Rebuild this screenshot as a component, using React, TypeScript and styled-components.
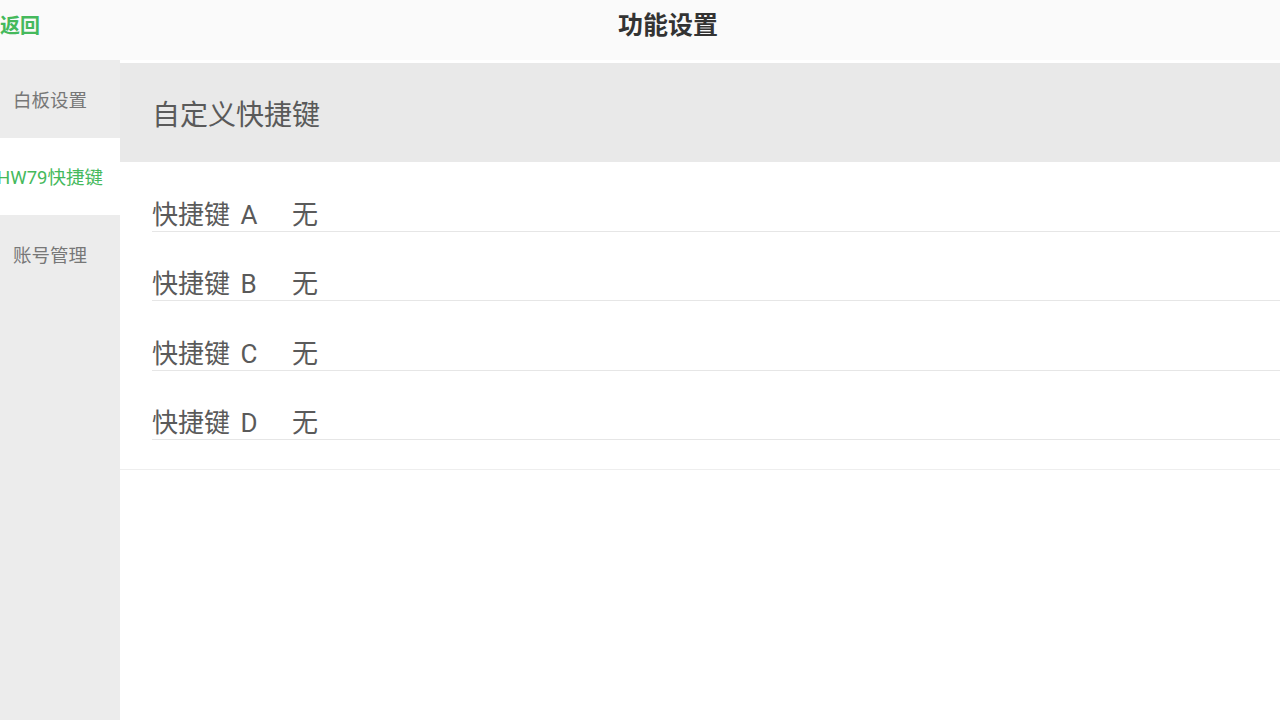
import React from 'react';
import styled, { createGlobalStyle } from 'styled-components';

const GlobalStyle = createGlobalStyle`
  html, body {
    margin: 0;
    padding: 0;
    background: #ffffff;
    font-family: Roboto, 'Noto Sans CJK SC', 'Noto Sans', sans-serif;
  }
  * { box-sizing: border-box; }
`;

const green = '#45b95c';

const navItems = ['白板设置', 'HW79快捷键', '账号管理'];
const shortcuts = [
  { key: '快捷键 A', value: '无' },
  { key: '快捷键 B', value: '无' },
  { key: '快捷键 C', value: '无' },
  { key: '快捷键 D', value: '无' },
];

export default function App() {
  const active = 1;

  return (
    <Page>
      <GlobalStyle />
      <TopBar>
        <BackButton>返回</BackButton>
        <Title>功能设置</Title>
      </TopBar>
      <Body>
        <Sidebar>
          {navItems.map((item, i) => (
            <NavItem key={item} active={i === active}>
              <span>{item}</span>
            </NavItem>
          ))}
        </Sidebar>
        <Main>
          <SectionHeader>自定义快捷键</SectionHeader>
          <ShortcutList>
            {shortcuts.map((s) => (
              <ShortcutRow key={s.key}>
                <Label>{s.key}</Label>
                <Value>{s.value}</Value>
              </ShortcutRow>
            ))}
          </ShortcutList>
        </Main>
      </Body>
    </Page>
  );
}

const Page = styled.div`
  width: 1280px;
  height: 720px;
  display: flex;
  flex-direction: column;
  overflow: hidden;
`;

const TopBar = styled.div`
  height: 60px;
  flex-shrink: 0;
  display: flex;
  align-items: center;
  padding-bottom: 8px;
  background: #fafafa;
`;

const BackButton = styled.div`
  width: 60px;
  font-size: 20px;
  font-weight: 700;
  line-height: 24px;
  color: ${green};
  cursor: pointer;
`;

const Title = styled.div`
  margin-left: 558px;
  font-size: 25px;
  font-weight: 700;
  line-height: 30px;
  color: #333333;
`;

const Body = styled.div`
  flex: 1;
  display: flex;
  min-height: 0;
`;

const Sidebar = styled.div`
  width: 120px;
  flex-shrink: 0;
  display: flex;
  flex-direction: column;
  background: #ececec;
`;

const NavItem = styled.div<{ active: boolean }>`
  height: 77.5px;
  display: flex;
  align-items: center;
  justify-content: center;
  padding-right: 20px;
  background: ${(p) => (p.active ? '#ffffff' : '#ececec')};
  color: ${(p) => (p.active ? green : '#777777')};
  font-size: 18.5px;
  white-space: nowrap;

  span {
    flex-shrink: 0;
  }
`;

const Main = styled.div`
  flex: 1;
  padding-top: 3px;
  background: #ffffff;
`;

const SectionHeader = styled.div`
  height: 99px;
  display: flex;
  align-items: center;
  padding-left: 32px;
  background: #e9e9e9;
  color: #5a5a5a;
  font-size: 28px;
`;

const ShortcutList = styled.div`
  padding-bottom: 29px;
  border-bottom: 1px solid #eeeeee;
`;

const ShortcutRow = styled.div`
  height: 69.5px;
  margin-left: 32px;
  padding-top: 37px;
  display: flex;
  align-items: center;
  border-bottom: 1px solid #e6e6e6;
  color: #5a5a5a;
  font-size: 26px;
`;

const Label = styled.div`
  width: 140px;
  line-height: 30px;
  word-spacing: 4px;
`;

const Value = styled.div`
  line-height: 30px;
`;
